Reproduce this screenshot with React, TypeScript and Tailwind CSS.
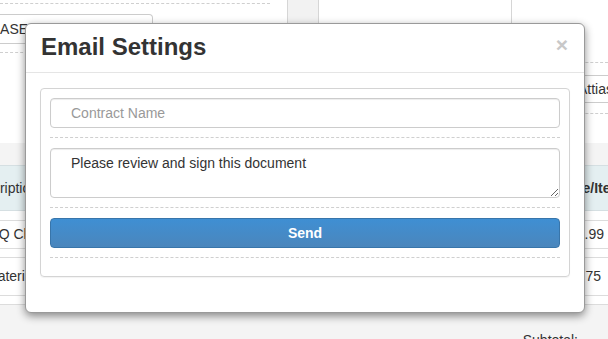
const EmailSettingsModal = () => {
  return (
    <div className="absolute left-[25px] top-[23px] w-[560px] h-[290px] bg-white border border-[#9a9a9a] rounded-[6px] shadow-[0_3px_9px_rgba(0,0,0,0.45)]">
      {/* Header */}
      <div className="flex items-start justify-between pl-[15px] pr-[16px] pt-[10px] pb-[12px] border-b border-[#e5e5e5]">
        <h4 className="text-[24px] leading-[26px] font-bold text-[#333]">Email Settings</h4>
        <button className="mt-[0px] text-[21px] leading-[21px] font-bold text-[#c8c8c8]">×</button>
      </div>

      {/* Body */}
      <div className="pt-[15px] pl-[14px] pr-[14px]">
        <div className="border border-[#d4d4d4] rounded-[4px] px-[9px] pt-[9px] pb-[18px] shadow-[0_1px_1px_rgba(0,0,0,0.05)]">
          <input
            type="text"
            placeholder="Contract Name"
            className="block w-full h-[30px] border border-[#cccccc] rounded-[4px] pl-[20px] text-[14px] text-[#333] placeholder:text-[#999] outline-none shadow-[inset_0_1px_1px_rgba(0,0,0,0.075)]"
          />
          <div className="mt-[9px] mb-[10px] border-t border-dashed border-[#cfcfcf]" />
          <textarea
            defaultValue="Please review and sign this document"
            className="block w-full h-[50px] border border-[#cccccc] rounded-[4px] pl-[20px] pt-[4px] text-[14px] leading-[20px] text-[#333] outline-none shadow-[inset_0_1px_1px_rgba(0,0,0,0.075)]"
          />
          <div className="mt-[9px] mb-[10px] border-t border-dashed border-[#cfcfcf]" />
          <button className="block w-full h-[30px] rounded-[4px] border border-[#3875aa] bg-gradient-to-b from-[#3f8fd3] to-[#4a86bc] text-white text-[14px] font-bold">
            Send
          </button>
          <div className="mt-[9px] border-t border-dashed border-[#cfcfcf]" />
        </div>
      </div>
    </div>
  );
};

const Background = () => {
  return (
    <div className="flex flex-col">
      {/* Top panels */}
      <div className="flex h-[143px]">
        <div className="w-[288px] shrink-0 bg-white border-r border-[#d6d6d6] pt-[3px]">
          <div className="w-[270px] border-t border-dashed border-[#cfcfcf]" />
          <div className="mt-[10px] w-[153px] h-[30px] border border-[#cccccc] rounded-r-[4px] border-l-0 flex items-center text-[14px] text-[#333] overflow-hidden">
            <span className="-ml-[10px]">CASE</span>
          </div>
          <div className="mt-[8px] w-[270px] border-t border-dashed border-[#cfcfcf]" />
        </div>
        <div className="w-[30px] shrink-0 bg-[#f2f2f2]" />
        <div className="w-[194px] shrink-0 bg-white border-l border-r border-[#d6d6d6]" />
        <div className="flex-1 min-w-0 bg-white pt-[62px]">
          <div className="border-t border-dashed border-[#cfcfcf]" />
          <div className="mt-[12px] h-[28px] border-y border-[#cccccc] flex items-center text-[14px] text-[#333] pl-[66px] overflow-hidden whitespace-nowrap">
            Attias
          </div>
          <div className="mt-[10px] border-t border-dashed border-[#cfcfcf]" />
        </div>
      </div>

      {/* Table */}
      <div className="mt-[22px] flex flex-col bg-white">
        <div className="h-[46px] bg-[#e4eff1] border-y border-[#d5dfe2] flex items-center justify-between text-[14px] text-[#333] overflow-hidden whitespace-nowrap">
          <span className="-ml-[32px]">Description</span>
          <span className="font-bold mr-[-15px]">Price/Item</span>
        </div>
        <div className="mt-[9px] h-[29px] border-y border-[#dcdcdc] flex items-center justify-between text-[14px] text-[#333] overflow-hidden whitespace-nowrap">
          <span className="-ml-[20px]">BBQ Chicken</span>
          <span className="mr-[4px]">$12.99</span>
        </div>
        <div className="mt-[8px] h-[39px] border-y border-[#dcdcdc] flex items-center justify-between text-[14px] text-[#333] overflow-hidden whitespace-nowrap">
          <span className="-ml-[14px]">Materials</span>
          <span className="mr-[7px]">$8.75</span>
        </div>
        <div className="mt-[8px] h-[1px] bg-[#dcdcdc]" />
      </div>
      <div className="flex justify-end pr-[30px] pt-[25px] text-[14px] text-[#333]">Subtotal:</div>
    </div>
  );
};

export default function App() {
  return (
    <div className="relative w-[608px] h-[339px] overflow-hidden bg-[#f4f4f4] font-['Liberation_Sans',Arial,sans-serif]">
      <Background />
      <EmailSettingsModal />
    </div>
  );
}
